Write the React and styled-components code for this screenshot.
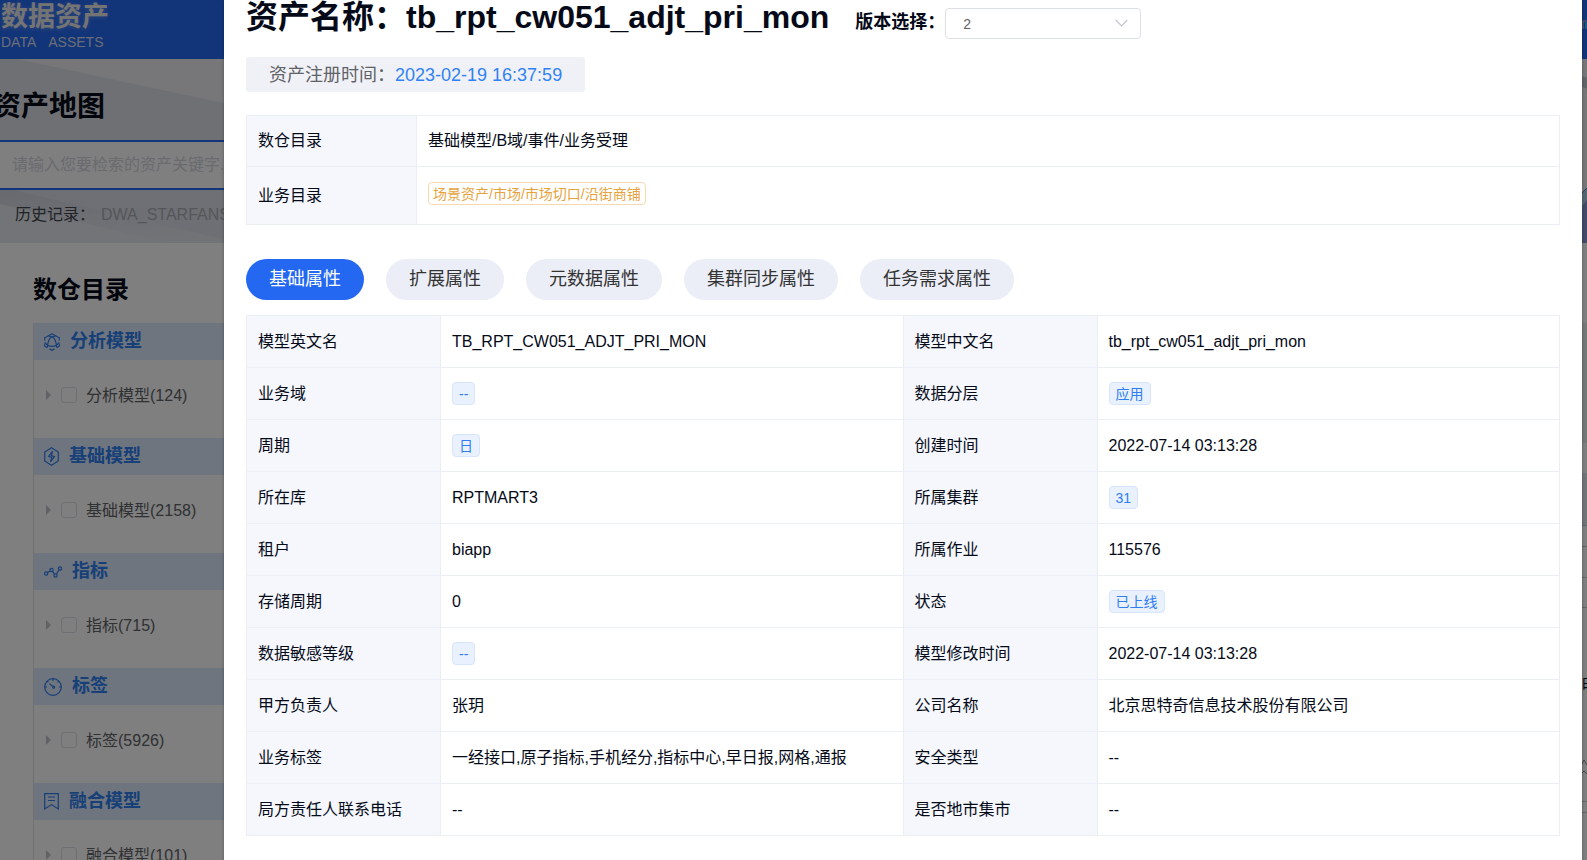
import React from "react";
import styled, { createGlobalStyle } from "styled-components";

const Global = createGlobalStyle`
  *, *::before, *::after { box-sizing: border-box; }
  body { margin: 0; background: #fff; }
  body, button, input, select { font-family: "Liberation Sans", "Noto Sans CJK SC", sans-serif; }
  h1, h2, h3 { margin: 0; padding: 0; }
`;

const Page = styled.div`
  position: relative;
  height: 100vh;
  overflow: hidden;
  background: #fff;
`;

const TopBar = styled.header`
  display: flex;
  justify-content: space-between;
  height: 59px;
  padding: 2px 0 0 1px;
  background: #2468f2;
  color: #e8e8e8;
`;

const Brand = styled.div`
  font-size: 27px;
  font-weight: 700;
  line-height: 30px;
  text-shadow: 0 1px 4px rgba(255, 255, 255, 0.3);
`;

const BrandSub = styled.div`
  display: flex;
  gap: 12px;
  font-size: 14px;
  line-height: 20px;
  color: #d4dcec;
`;

const Banner = styled.section`
  position: relative;
  height: 184px;
  background: #eeeff4;
`;

const BannerArt = styled.svg`
  position: absolute;
  top: 0;
  ${(p) => (p.$side === "right" ? "right: 0;" : "left: 0;")}
`;

const BannerContent = styled.div`
  position: relative;
`;

const BannerTitle = styled.h1`
  height: 81px;
  margin-left: -7px;
  font-size: 28px;
  line-height: 96px;
  color: #050a18;
`;

const SearchInput = styled.input`
  display: block;
  width: 80%;
  height: 50px;
  padding: 0 12px;
  border: solid #2468f2;
  border-width: 2px 0;
  border-radius: 0;
  background: #fff;
  font-size: 16px;
  &::placeholder { color: #d4d6dc; opacity: 1; }
`;

const History = styled.div`
  display: flex;
  gap: 6px;
  padding-left: 15px;
  font-size: 16px;
  line-height: 50px;
  color: #43464d;
`;

const HistoryLink = styled.a`
  color: #a9acb3;
  text-decoration: none;
`;

const Body = styled.div`
  display: flex;
  justify-content: space-between;
`;

const Side = styled.aside`
  width: 300px;
  padding: 26px 0 0 33px;
`;

const SideTitle = styled.h2`
  height: 54px;
  font-size: 24px;
  line-height: 42px;
  color: #050a18;
`;

const Tree = styled.div`
  border-left: 1px solid #e2e3e8;
`;

const GroupHead = styled.h3`
  display: flex;
  align-items: center;
  gap: 10px;
  height: 37px;
  padding-left: 10px;
  background: #dceafc;
  color: #2f7ef0;
  font-size: 18px;
  line-height: 39px;
`;

const GroupItem = styled.label`
  display: flex;
  align-items: center;
  height: 78px;
  padding: 0 0 8px 12px;
  color: #606266;
  font-size: 16px;
`;

const ItemName = styled.span`
  padding-bottom: 3px;
`;

const Caret = styled.span`
  border: 5px solid transparent;
  border-left-color: #c0c4cc;
  border-right-width: 0;
`;

const Check = styled.input`
  appearance: none;
  width: 16px;
  height: 16px;
  margin: 0 9px 0 10px;
  border: 1px solid #dcdfe6;
  border-radius: 3px;
  background: #fff;
`;

const Results = styled.div`
  width: 5px;
  padding-top: 80px;
`;

const ResultBand = styled.div`
  height: ${(p) => p.$h}px;
  background: ${(p) => p.$bg || "#fff"};
  border-bottom: 1px solid ${(p) => p.$line || "transparent"};
`;

const ResultTitle = styled.div`
  height: 104px;
  padding-top: 66px;
  overflow: hidden;
  font-size: 16px;
  line-height: 24px;
  color: #050a18;
  white-space: nowrap;
`;

const Mask = styled.div`
  position: absolute;
  inset: 0;
  display: flex;
  padding: 0 5px 0 224px;
  background: rgba(0, 0, 0, 0.5);
`;

const Dialog = styled.main`
  flex: 1;
  min-width: 0;
  padding: 0 22px;
  background: #fff;
  box-shadow: 0 1px 3px rgba(0, 0, 0, 0.3);
  color: #050a18;
`;

const TitleRow = styled.div`
  display: flex;
  height: 57px;
`;

const AssetName = styled.h2`
  margin-right: 26px;
  font-size: 32px;
  line-height: 34px;
  white-space: nowrap;
`;

const VersionLabel = styled.label`
  font-size: 18px;
  font-weight: 700;
  line-height: 44px;
  white-space: nowrap;
`;

const SelectBox = styled.span`
  position: relative;
  height: 31px;
  margin-top: 8px;
`;

const VersionSelect = styled.select`
  appearance: none;
  width: 196px;
  height: 31px;
  padding: 0 17px;
  border: 1px solid #dcdfe6;
  border-radius: 4px;
  background: #fff;
  color: #606266;
  font-size: 14px;
`;

const Chevron = styled.svg`
  position: absolute;
  right: 13px;
  top: 11px;
  pointer-events: none;
`;

const Registered = styled.div`
  width: fit-content;
  height: 35px;
  padding: 0 23px;
  border-radius: 3px;
  background: #f0f1f7;
  color: #606266;
  font-size: 18px;
  line-height: 36px;
`;

const RegisteredTime = styled.time`
  color: #2f82f5;
`;

const Sheet = styled.table`
  width: 100%;
  margin-top: ${(p) => p.$top}px;
  border-collapse: collapse;
  table-layout: fixed;
  font-size: 16px;
  line-height: 24px;
`;

const LabelCell = styled.th`
  width: ${(p) => p.$w}px;
  height: ${(p) => p.$h}px;
  padding: 0 11px;
  border: 1px solid #ebeef5;
  background: #f5f7fd;
  font-weight: 400;
  text-align: left;
`;

const ValueCell = styled.td`
  padding: 0 11px;
  border: 1px solid #ebeef5;
`;

const Tag = styled.span`
  display: block;
  width: fit-content;
  height: 23px;
  padding: 0 6px;
  border: 1px solid #d6e5fc;
  border-radius: 4px;
  background: #e9f1fe;
  color: #2f7ef0;
  font-size: 14px;
  line-height: 22px;
`;

const PathTag = styled(Tag)`
  padding: 0 4px;
  margin-bottom: 4px;
  border-color: #f5dab1;
  background: #fff;
  color: #e6a23c;
`;

const Tabs = styled.nav`
  display: flex;
  gap: 22px;
  margin-top: 34px;
`;

const Tab = styled.button`
  height: 41px;
  padding: 0 23px;
  border: 0;
  border-radius: 21px;
  background: ${(p) => (p.$active ? "#2468f2" : "#ebeef7")};
  color: ${(p) => (p.$active ? "#fff" : "#333")};
  font-size: 18px;
  line-height: 41px;
  white-space: nowrap;
`;

const Icon = ({ w, h, children }) => (
  <svg width={w} height={h} viewBox={`0 0 ${w} ${h}`} fill="none" stroke="#2f7ef0" strokeWidth="1.2" aria-hidden="true">
    {children}
  </svg>
);

const icons = {
  analysis: (
    <Icon w={16} h={18}>
      <path d="M8 .8 15.300 4.800V7.500M15.300 10.500v2.700L12.800 14.600M10.500 15.900 8 17.200l-2.500-1.300M3.200 14.600.7 13.200v-2.700M.7 7.500V4.800L8 .8" />
      <path d="M8 3.300C5.500 5.300 4 8.500 3.600 12.200c2.600 1.300 6.200 1.300 8.800 0C12 8.500 10.500 5.300 8 3.300zM4.300 2.800 8 4.200l3.700-1.400M.8 9.500l2.800 2.600-.4 2.600M15.200 9.500l-2.800 2.600.4 2.600" />
    </Icon>
  ),
  base: (
    <Icon w={15} h={19}>
      <path d="M7.500.8 14.300 5v9l-6.800 4.200L.7 14V5z" />
      <path d="M8.700 4 4.600 9.400l3.200 1.100L6.400 15l4.100-5.400-3.200-1.100z" />
    </Icon>
  ),
  metric: (
    <Icon w={18} h={14}>
      <circle cx="2.200" cy="8.500" r="1.600" />
      <circle cx="7.500" cy="5" r="1.600" />
      <circle cx="11.500" cy="10.500" r="1.600" />
      <circle cx="16" cy="3.500" r="1.600" />
      <path d="M3.600 7.600 6.100 6M8.500 6.300l2 2.900M12.400 9.100l2.700-4.300" />
    </Icon>
  ),
  tag: (
    <Icon w={18} h={18}>
      <circle cx="9" cy="9" r="8.300" />
      <path d="M9 .8v2.200M.8 9H3M15 9h2.200M3.200 3.200l1.200 1.200M14.800 3.200l-1.200 1.200M5.500 5.800 9 8.600" />
      <circle cx="9.600" cy="9.200" r="1" />
    </Icon>
  ),
  merged: (
    <Icon w={15} h={17}>
      <path d="M.7.7h13.600v15.200l-6.800-4.300-6.800 4.300zM4 4h7M4 7.500h7" />
    </Icon>
  ),
};

const groups = [
  { icon: "analysis", name: "分析模型", count: 124 },
  { icon: "base", name: "基础模型", count: 2158 },
  { icon: "metric", name: "指标", count: 715 },
  { icon: "tag", name: "标签", count: 5926 },
  { icon: "merged", name: "融合模型", count: 101 },
];

const tabs = ["基础属性", "扩展属性", "元数据属性", "集群同步属性", "任务需求属性"];

const t = (text) => <Tag>{text}</Tag>;

const rows = [
  ["模型英文名", "TB_RPT_CW051_ADJT_PRI_MON", "模型中文名", "tb_rpt_cw051_adjt_pri_mon"],
  ["业务域", t("--"), "数据分层", t("应用")],
  ["周期", t("日"), "创建时间", "2022-07-14 03:13:28"],
  ["所在库", "RPTMART3", "所属集群", t("31")],
  ["租户", "biapp", "所属作业", "115576"],
  ["存储周期", "0", "状态", t("已上线")],
  ["数据敏感等级", t("--"), "模型修改时间", "2022-07-14 03:13:28"],
  ["甲方负责人", "张玥", "公司名称", "北京思特奇信息技术股份有限公司"],
  ["业务标签", "一经接口,原子指标,手机经分,指标中心,早日报,网格,通报", "安全类型", "--"],
  ["局方责任人联系电话", "--", "是否地市集市", "--"],
];

export default function App() {
  return (
    <Page>
      <Global />
      <TopBar>
        <div>
          <Brand>数据资产</Brand>
          <BrandSub><span>DATA</span><span>ASSETS</span></BrandSub>
        </div>
        <svg width="5" height="40" viewBox="0 0 5 40" aria-hidden="true">
          <path d="M1 27v-8h4" fill="none" stroke="#c9b9c4" strokeWidth="1.200" />
          <path d="M4 20v7" stroke="#3fb4f5" strokeWidth="2" />
        </svg>
      </TopBar>
      <Banner>
        <BannerArt width="420" height="184" viewBox="0 0 420 184" aria-hidden="true">
          <defs>
            <linearGradient id="fold" x1="0" y1="0" x2="0" y2="1">
              <stop offset="0" stopColor="#dfe1e8" />
              <stop offset="1" stopColor="#dcdfea" />
            </linearGradient>
            <linearGradient id="streak" x1="0" y1="0" x2="0.300" y2="1">
              <stop offset="0" stopColor="#cfd3df" />
              <stop offset="1" stopColor="#e4e6ee" />
            </linearGradient>
          </defs>
          <path d="M0 0h18l402 86v98H0z" fill="url(#fold)" />
          <path d="M0 128 240 184H0z" fill="url(#streak)" />
          <path d="M0 145 170 184H0z" fill="#e6e8ee" />
        </BannerArt>
        <BannerArt $side="right" width="5" height="184" viewBox="0 0 5 184" aria-hidden="true">
          <path d="M0 17l5 2v11l-5-2z" fill="#c3c8d2" />
          <path d="M0 134l5-5v12l-5 8z" fill="#a9cfe6" />
          <path d="M0 134l5-5" stroke="#3f7ec2" />
          <path d="M0 147l5-6v43H0z" fill="#8797cd" />
        </BannerArt>
        <BannerContent>
          <BannerTitle>资产地图</BannerTitle>
          <SearchInput aria-label="资产检索" placeholder="请输入您要检索的资产关键字..." />
          <History>
            <span>历史记录：</span>
            <HistoryLink href="#history">DWA_STARFANS</HistoryLink>
          </History>
        </BannerContent>
      </Banner>
      <Body>
        <Side>
          <SideTitle>数仓目录</SideTitle>
          <Tree>
            {groups.map((g) => (
              <div key={g.name}>
                <GroupHead>{icons[g.icon]}{g.name}</GroupHead>
                <GroupItem>
                  <Caret />
                  <Check type="checkbox" />
                  <ItemName>{g.name}({g.count})</ItemName>
                </GroupItem>
              </div>
            ))}
          </Tree>
        </Side>
        <Results>
          <ResultBand $h={120} $bg="#eceef3" />
          <ResultBand $h={30} />
          <ResultBand $h={53} $bg="#e4e8f2" $line="#c8cad0" />
          <ResultBand $h={21} $line="#c8cad0" />
          <ResultBand $h={31} $line="#c8cad0" />
          <ResultBand $h={30} $line="#c8cad0" />
          <ResultTitle>明</ResultTitle>
          <ResultBand $h={90} $line="#c8cad0">
            <svg width="5" height="90" viewBox="0 0 5 90" fill="none" stroke="#8a8d94" aria-hidden="true">
              <path d="M0 52l2-4 3 5M0 61l2-2 3 3" />
            </svg>
          </ResultBand>
          <ResultBand $h={11} $line="#c8cad0" />
        </Results>
      </Body>
      <Mask>
        <Dialog role="dialog" aria-label="资产详情">
          <TitleRow>
            <AssetName>资产名称：tb_rpt_cw051_adjt_pri_mon</AssetName>
            <VersionLabel htmlFor="version">版本选择：</VersionLabel>
            <SelectBox>
              <VersionSelect id="version" defaultValue="2">
                <option value="2">2</option>
              </VersionSelect>
              <Chevron width="13" height="9" viewBox="0 0 13 9" fill="none" stroke="#c0c4cc" strokeWidth="1.200">
                <path d="M.7 1l5.800 6 5.800-6" />
              </Chevron>
            </SelectBox>
          </TitleRow>
          <Registered>资产注册时间：<RegisteredTime>2023-02-19 16:37:59</RegisteredTime></Registered>
          <Sheet $top={23}>
            <tbody>
              <tr>
                <LabelCell scope="row" $w={170} $h={51}>数仓目录</LabelCell>
                <ValueCell>基础模型/B域/事件/业务受理</ValueCell>
              </tr>
              <tr>
                <LabelCell scope="row" $w={170} $h={58}>业务目录</LabelCell>
                <ValueCell><PathTag>场景资产/市场/市场切口/沿街商铺</PathTag></ValueCell>
              </tr>
            </tbody>
          </Sheet>
          <Tabs>
            {tabs.map((name, i) => (
              <Tab key={name} type="button" $active={i === 0}>{name}</Tab>
            ))}
          </Tabs>
          <Sheet $top={15}>
            <tbody>
              {rows.map(([a, b, c, d]) => (
                <tr key={a}>
                  <LabelCell scope="row" $w={194} $h={52}>{a}</LabelCell>
                  <ValueCell>{b}</ValueCell>
                  <LabelCell scope="row" $w={194} $h={52}>{c}</LabelCell>
                  <ValueCell>{d}</ValueCell>
                </tr>
              ))}
            </tbody>
          </Sheet>
        </Dialog>
      </Mask>
    </Page>
  );
}
